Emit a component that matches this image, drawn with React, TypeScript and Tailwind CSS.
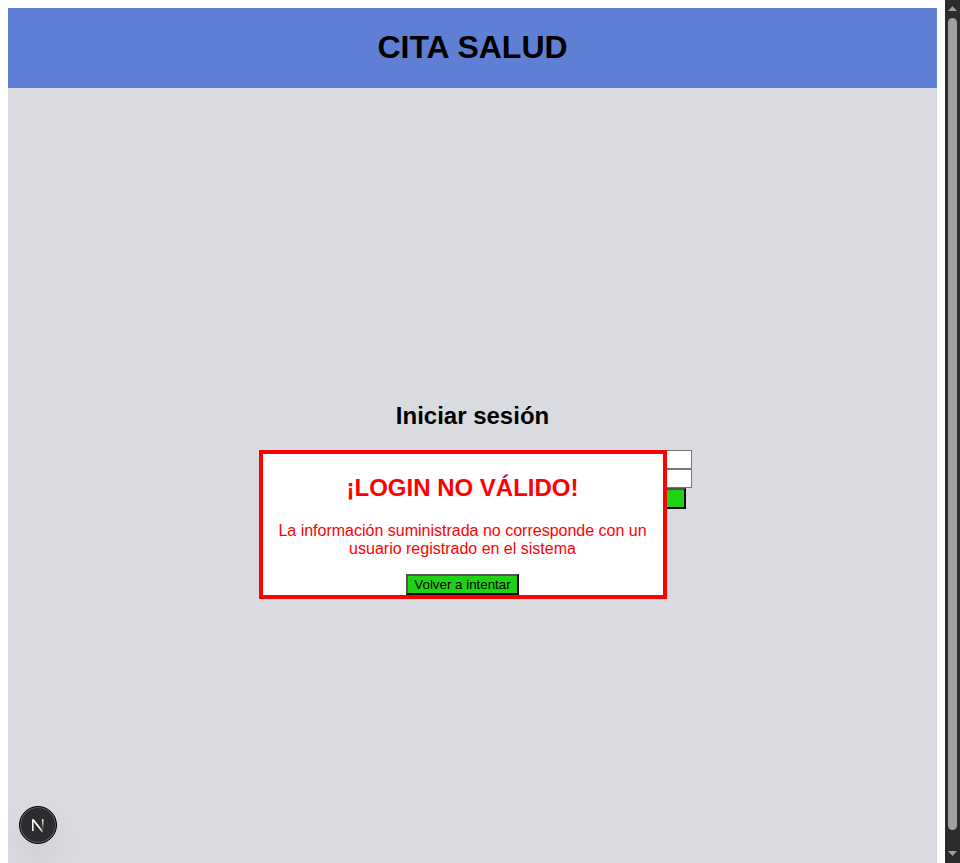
function Header() {
  return (
    <header className="flex h-20 shrink-0 items-center justify-center bg-[#5f7fd4] pb-0.5">
      <h1 className="text-[32px] leading-[36px] font-bold">CITA SALUD</h1>
    </header>
  );
}

function LoginError() {
  return (
    <section
      role="alertdialog"
      className="absolute top-0 left-0 flex h-[149px] w-[408px] flex-col items-center border-4 border-[#ff0000] bg-white pr-px text-center text-[#ff0000]"
    >
      <h2 className="mt-5 text-2xl leading-[27px] font-bold">¡LOGIN NO VÁLIDO!</h2>
      <p className="mt-[21px] w-full px-2 text-base leading-[18px]">
        La información suministrada no corresponde con un usuario registrado en el sistema
      </p>
      <button className="mt-4 h-[21px] w-[113px] border-2 border-[#000000] [border-style:outset] bg-[#1fd314] text-[13.333px] leading-[15px] whitespace-nowrap text-black">
        Volver a intentar
      </button>
    </section>
  );
}

function LoginForm() {
  return (
    <div className="relative flex h-[149px] w-[433px] flex-col items-end">
      <input aria-label="Usuario" className="h-[19px] w-[153px] shrink-0 border border-[#767676] bg-white" />
      <input
        aria-label="Clave"
        type="password"
        className="h-[19px] w-[153px] shrink-0 border border-[#767676] bg-white"
      />
      <button
        aria-label="Ingresar"
        className="mr-1.5 h-[21px] w-[110px] shrink-0 border-2 border-[#000000] [border-style:outset] bg-[#1fd314]"
      />
      <LoginError />
    </div>
  );
}

function DevBadge() {
  return (
    <div className="absolute bottom-[19px] left-[19px] flex size-[38px] items-center justify-center rounded-full border border-black bg-[#2b2d2e] shadow-[0_16px_32px_-8px_rgba(0,0,0,0.16)] ring-1 ring-[#626365] ring-inset">
      <svg width="38" height="38" viewBox="0 0 38 38" fill="none" className="shrink-0">
        <defs>
          <linearGradient id="diagonal" x1="20" y1="20.5" x2="24.5" y2="26.5" gradientUnits="userSpaceOnUse">
            <stop stopColor="white" />
            <stop offset="0.6" stopColor="white" stopOpacity="0.8" />
            <stop offset="1" stopColor="white" stopOpacity="0" />
          </linearGradient>
          <linearGradient id="stem" x1="23.5" y1="13" x2="23.5" y2="24" gradientUnits="userSpaceOnUse">
            <stop stopColor="white" />
            <stop offset="1" stopColor="white" stopOpacity="0" />
          </linearGradient>
        </defs>
        <path d="M13 13.2H14.9L24.6 25.8L23.3 26.7L14.6 15.8V25H13Z" fill="url(#diagonal)" />
        <path d="M22.9 13.2H24.5V25H22.9Z" fill="url(#stem)" />
      </svg>
    </div>
  );
}

function Scrollbar() {
  return (
    <div className="flex h-full w-[15px] shrink-0 flex-col items-center bg-[#2c2c2c]">
      <svg width="15" height="18" viewBox="0 0 15 18" className="shrink-0">
        <path d="M3 11L7.5 6L12 11Z" fill="#9f9f9f" />
      </svg>
      <div className="h-[812px] w-[9px] shrink-0 rounded-full bg-[#9f9f9f]" />
      <svg width="15" height="33" viewBox="0 0 15 33" className="shrink-0">
        <path d="M3 21L7.5 26L12 21Z" fill="#9f9f9f" />
      </svg>
    </div>
  );
}

export default function App() {
  return (
    <div className="relative flex h-[863px] w-[960px] overflow-hidden bg-white font-['Liberation_Sans',Arial,sans-serif] text-black">
      <div className="flex min-w-0 flex-1 flex-col px-2 pt-2">
        <Header />
        <main className="flex flex-1 flex-col items-center bg-[#d9dbe0] pt-[314px]">
          <h2 className="mb-[21px] text-2xl leading-[27px] font-bold">Iniciar sesión</h2>
          <div className="flex w-full pl-[251px]">
            <LoginForm />
          </div>
        </main>
      </div>
      <Scrollbar />
      <DevBadge />
    </div>
  );
}
